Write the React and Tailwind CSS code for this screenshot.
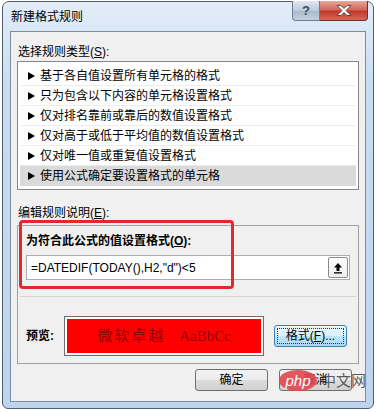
import React from "react";

const FONT = { fontFamily: '"Liberation Sans", "Noto Sans CJK SC", sans-serif' };

const ruleTypes = [
  "基于各自值设置所有单元格的格式",
  "只为包含以下内容的单元格设置格式",
  "仅对排名靠前或靠后的数值设置格式",
  "仅对高于或低于平均值的数值设置格式",
  "仅对唯一值或重复值设置格式",
  "使用公式确定要设置格式的单元格",
];

function Btn({ children, className = "" }) {
  return (
    <div
      className={`h-[22px] flex items-center justify-center rounded-[3px] border border-[#707070] bg-[linear-gradient(#f2f2f2_0%,#ebebeb_50%,#dddddd_51%,#cfcfcf_100%)] text-[12px] text-black ${className}`}
    >
      {children}
    </div>
  );
}

export default function App() {
  return (
    <div className="w-[377px] h-[412px] bg-white pt-[1px] pl-[2px]" style={FONT}>
      {/* window frame */}
      <div className="w-[372px] h-[408px] rounded-t-[7px] rounded-b-[6px] border border-[#4f5f70] bg-[linear-gradient(#e3edf8,#c9ddf2_20%,#bcd4ee)] px-[7px] pb-[6px] flex flex-col">
        {/* title bar */}
        <div className="h-[29px] flex items-start justify-between relative">
          <span className="mt-[7px] ml-[1px] text-[12px] text-black leading-[16px]">新建格式规则</span>
          <div className="flex mr-[-2px] -mt-[1px]">
            <div className="w-[28px] h-[20px] rounded-bl-[4px] border border-[#6d7d8f] border-t-0 bg-[linear-gradient(#dfe7f0,#bccadb_50%,#a8b8cc_51%,#c3d0df)] flex items-center justify-center text-[13px] font-bold text-[#3d4b5c] leading-none">
              ?
            </div>
            <div className="w-[48px] h-[20px] rounded-br-[4px] border border-[#6f2d2d] border-t-0 border-l-0 bg-[linear-gradient(#e9a99a,#d2675a_45%,#c1392b_55%,#d86a55)] flex items-center justify-center">
              <svg width="16" height="11" viewBox="0 0 16 11">
                <path d="M1 0.5h4l3 3 3-3h4l-5 5 5 5h-4l-3-3-3 3h-4l5-5z" fill="#fff" stroke="#5a2a2a" strokeWidth="0.8" />
              </svg>
            </div>
          </div>
        </div>

        {/* client area */}
        <div className="flex-1 border border-[#7d8e9f] bg-[#f0f0f0] px-[6px] flex flex-col">
          <div className="mt-[12px] h-[16px] leading-[16px] text-[12px] text-black pl-[1px]">
            选择规则类型(<span className="underline">S</span>):
          </div>

          {/* rule type list */}
          <div className="mt-[1px] h-[129px] border border-[#828790] bg-white pt-[4px] px-[2px]">
            {ruleTypes.map((t, i) => (
              <div
                key={i}
                className={`h-[20px] flex items-center text-[12px] text-black border-b ${
                  i === ruleTypes.length - 1 ? "bg-[#dadada] border-transparent" : "border-[#ececec]"
                }`}
              >
                <svg className="ml-[8px] mr-[5px]" width="7" height="8" viewBox="0 0 7 8">
                  <path d="M0 0 L7 4 L0 8 Z" fill="#000" />
                </svg>
                <span>{t}</span>
              </div>
            ))}
          </div>

          <div className="mt-[15px] h-[16px] leading-[16px] text-[12px] text-black pl-[1px]">
            编辑规则说明(<span className="underline">E</span>):
          </div>

          {/* rule description group */}
          <div className="relative mt-[4px] h-[139px] border border-[#a0a0a0] px-[8px]">
            <div className="absolute left-[1px] top-[-6px] w-[215px] h-[69px] rounded-[4px] border-[3px] border-[#e5282a]" />
            <div className="mt-[7px] h-[16px] leading-[16px] text-[12px] font-bold text-black">
              为符合此公式的值设置格式(<span className="underline">O</span>):
            </div>
            <div className="mt-[6px] h-[25px] border border-[#abadb3] bg-white flex items-center justify-between pl-[4px] pr-[1px]">
              <span className="text-[12px] text-black">=DATEDIF(TODAY(),H2,"d")&lt;5</span>
              <div className="w-[20px] h-[21px] border border-[#8a8a8a] rounded-[2px] bg-[linear-gradient(#ffffff,#ececec)] flex items-center justify-center">
                <svg width="10" height="12" viewBox="0 0 10 12">
                  <path d="M5 1 L9 5.5 H6.5 V9 H3.5 V5.5 H1 Z" fill="#000" />
                  <rect x="1" y="10.2" width="8" height="1.3" fill="#000" />
                </svg>
              </div>
            </div>
            <div className="mt-[16px] h-[1px] bg-[#d5d5d5] mx-[-6px]" />
            <div className="mt-[19px] flex items-center">
              <span className="w-[38px] text-[12px] font-bold text-black">预览:</span>
              <div className="w-[200px] h-[40px] border border-[#6e6e6e] bg-white p-[2px]">
                <div
                  className="w-full h-full bg-[#ff0000] flex items-center justify-center text-[#8e0000] text-[15px]"
                  style={{ fontFamily: '"Liberation Serif", "Noto Sans CJK SC", serif' }}
                >
                  <span className="tracking-[2px]">微软卓越</span>
                  <span className="ml-[14px]">AaBbCc</span>
                </div>
              </div>
              <div className="ml-[10px] w-[73px] h-[22px] rounded-[3px] border border-[#3c7fb1] bg-[linear-gradient(#eaf6fd,#d9f0fc_50%,#bee6fd_51%,#a7d9f5)] p-[2px]">
                <div className="w-full h-full border border-dotted border-[#333] flex items-center justify-center text-[12px] text-black">
                  格式(<span className="underline">F</span>)...
                </div>
              </div>
            </div>
          </div>

          {/* dialog buttons */}
          <div className="mt-[5px] flex justify-end pr-[7px] gap-[11px] relative">
            <Btn className="w-[73px]">确定</Btn>
            <Btn className="w-[73px]">取消</Btn>
            <div className="absolute right-[-7px] top-[1px] flex items-center pointer-events-none">
              <div
                className="w-[38px] h-[21px] rounded-[50%] bg-[#e0474c]/90 flex items-center justify-center text-white text-[15px] italic leading-none"
                style={{ fontFamily: '"Liberation Sans", sans-serif' }}
              >
                php
              </div>
              <span className="ml-[4px] text-[15px] text-[#333]/80 leading-none">中文网</span>
            </div>
          </div>
        </div>
      </div>
    </div>
  );
}
